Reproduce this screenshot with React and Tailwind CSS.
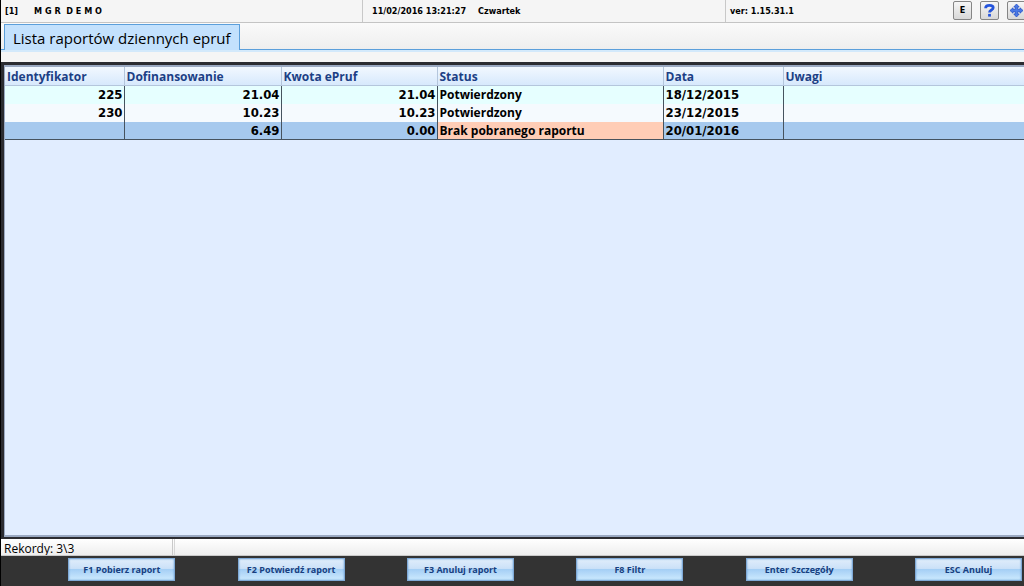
const columns = [
    { key: 'id', label: 'Identyfikator', width: 'w-[119px]', numeric: true },
    { key: 'subsidy', label: 'Dofinansowanie', width: 'w-[157px]', numeric: true },
    { key: 'amount', label: 'Kwota ePruf', width: 'w-[156px]', numeric: true },
    { key: 'status', label: 'Status', width: 'w-[226px]' },
    { key: 'date', label: 'Data', width: 'w-[120px]' },
    { key: 'notes', label: 'Uwagi', width: '' },
];

const reports = [
    { id: '225', subsidy: '21.04', amount: '21.04', status: 'Potwierdzony', date: '18/12/2015', notes: '' },
    { id: '230', subsidy: '10.23', amount: '10.23', status: 'Potwierdzony', date: '23/12/2015', notes: '' },
    { id: '', subsidy: '6.49', amount: '0.00', status: 'Brak pobranego raportu', date: '20/01/2016', notes: '', missing: true },
];

const rowColors = ['bg-[#e6ffff]', 'bg-[#f5fafe]', 'bg-[#a6c9ee]'];

const actions = [
    'F1 Pobierz raport',
    'F2 Potwierdź raport',
    'F3 Anuluj raport',
    'F8 Filtr',
    'Enter Szczegóły',
    'ESC Anuluj',
];

const cellFont = (col) =>
    col.numeric || col.key === 'date'
        ? "font-['DejaVu_Sans_Condensed','DejaVu_Sans',sans-serif] text-[13px]"
        : 'text-xs';

const ToolButton = ({ label, children }) => (
    <button
        type="button"
        aria-label={label}
        className="flex h-[19px] w-[19px] shrink-0 items-center justify-center rounded-xs border border-[#858585] bg-gradient-to-b from-[#f6f6f6] to-[#d8d8d8] text-[9px] font-bold"
    >
        {children}
    </button>
);

const HelpIcon = () => (
    <svg viewBox="0 0 15 15" className="h-[15px] w-[15px]" fill="none" stroke="#2454dc" strokeWidth="2.8">
        <path d="M3.6 5.2 C3.6 2.8 5 2.4 7.4 2.4 C9.8 2.4 11.2 3.1 11.2 4.7 C11.2 7.2 7.5 6.8 7.5 9.6" />
        <path d="M7.5 10.9 V13.6" />
    </svg>
);

const MoveIcon = () => (
    <svg viewBox="0 0 15 15" className="h-[15px] w-[15px] shrink-0" fill="#4a79e6" stroke="#2450c8" strokeWidth="0.8">
        <path d="M7.5 1 L10.2 4 H8.7 V6.3 H11 V4.8 L14 7.5 L11 10.2 V8.7 H8.7 V11 H10.2 L7.5 14 L4.8 11 H6.3 V8.7 H4 V10.2 L1 7.5 L4 4.8 V6.3 H6.3 V4 H4.8 Z" />
    </svg>
);

const TopBar = () => (
    <header className="flex h-[23px] shrink-0 overflow-hidden border-b border-[#c4c4c4] bg-[#f5f5f5] font-['DejaVu_Sans_Condensed','DejaVu_Sans',sans-serif] text-[9px] leading-[23px] font-bold">
        <div className="flex w-[362px] shrink-0 gap-4 border-r border-[#c8c8c8] pl-1">
            <span>[1]</span>
            <span>M G R&nbsp; D E M O</span>
        </div>
        <div className="flex w-[363px] shrink-0 gap-3 border-r border-[#c8c8c8] pl-[9px]">
            <span>11/02/2016 13:21:27</span>
            <span>Czwartek</span>
        </div>
        <span className="pl-1">ver: 1.15.31.1</span>
        <div className="-mr-0.5 ml-auto flex gap-2 pt-px">
            <ToolButton label="E">E</ToolButton>
            <ToolButton label="Pomoc"><HelpIcon /></ToolButton>
            <ToolButton label="Przesuń"><MoveIcon /></ToolButton>
        </div>
    </header>
);

const ReportTable = () => (
    <table className="w-full table-fixed border-collapse font-bold">
        <thead>
            <tr className="h-[18px] bg-gradient-to-b from-[#f2f8ff] to-[#d5e8fc] text-left text-xs leading-[17px] text-[#1c3f85]">
                {columns.map((col) => (
                    <th key={col.key} className={`${col.width} border-r border-b border-[#b4c6dc] px-0.5 pt-px leading-[17px] last:border-r-0`}>
                        {col.label}
                    </th>
                ))}
            </tr>
        </thead>
        <tbody>
            {reports.map((report, i) => (
                <tr key={report.date} className={`h-[18px] last:border-b last:border-[#46535f] ${rowColors[i]}`}>
                    {columns.map((col) => (
                        <td
                            key={col.key}
                            className={`border-r border-[#46535f] pt-px pr-px pl-0.5 leading-4 last:border-r-0 ${cellFont(col)} ${col.numeric ? 'text-right' : ''} ${report.missing && col.key === 'status' ? 'bg-[#ffcdb6]' : ''}`}
                        >
                            {report[col.key]}
                        </td>
                    ))}
                </tr>
            ))}
        </tbody>
    </table>
);

const App = () => (
    <div className="flex h-screen flex-col overflow-hidden border-l border-black bg-[#f5f5f5] font-['Open_Sans','Noto_Sans',sans-serif] text-black">
        <TopBar />

        <div className="flex h-[29px] shrink-0 items-end border-b-2 border-[#d3e9fb] bg-gradient-to-b from-[#fafafa] to-[#eeeeee]">
            <div className="w-[3px] border-b border-[#5b9fdb]" />
            <h1 className="h-[26px] border border-b-0 border-[#5b9fdb] bg-[#c3e1fd] px-2 text-[15px] leading-[26px]">
                Lista raportów dziennych epruf
            </h1>
            <div className="flex-1 border-b border-[#5b9fdb]" />
        </div>

        <main className="mt-[10px] min-h-0 flex-1 border-t-3 border-b-2 border-l-3 border-[#2b2c31] bg-[#e1edff]">
            <div className="h-full border-y-2 border-l border-[#9aa9c2]">
                <ReportTable />
            </div>
        </main>

        <div className="flex h-[17px] shrink-0 overflow-hidden border-b border-[#c9c9c9] bg-gradient-to-b from-white to-[#eeeeee] text-xs leading-5">
            <span className="w-[172px] border-r border-[#c9c9c9] pl-[3px]">Rekordy: 3\3</span>
            <span className="w-0.5 border-r border-[#d6d6d6]" />
        </div>

        <footer className="grid h-[30px] shrink-0 grid-cols-6 bg-[#333333] pt-0.5 pr-[2px] pl-[5px]">
            {actions.map((action) => (
                <div key={action} className="flex justify-end">
                    <button
                        type="button"
                        className="h-[23px] w-[107px] border border-[#7fa9d6] bg-[linear-gradient(#e0edfb,#cbe1f8_45%,#a5cff5_50%,#cdeafe)] text-[9px] font-bold whitespace-nowrap text-[#173f80] shadow-[inset_0_0_2px_#5f97d0]"
                    >
                        {action}
                    </button>
                </div>
            ))}
        </footer>
    </div>
);

export default App;
